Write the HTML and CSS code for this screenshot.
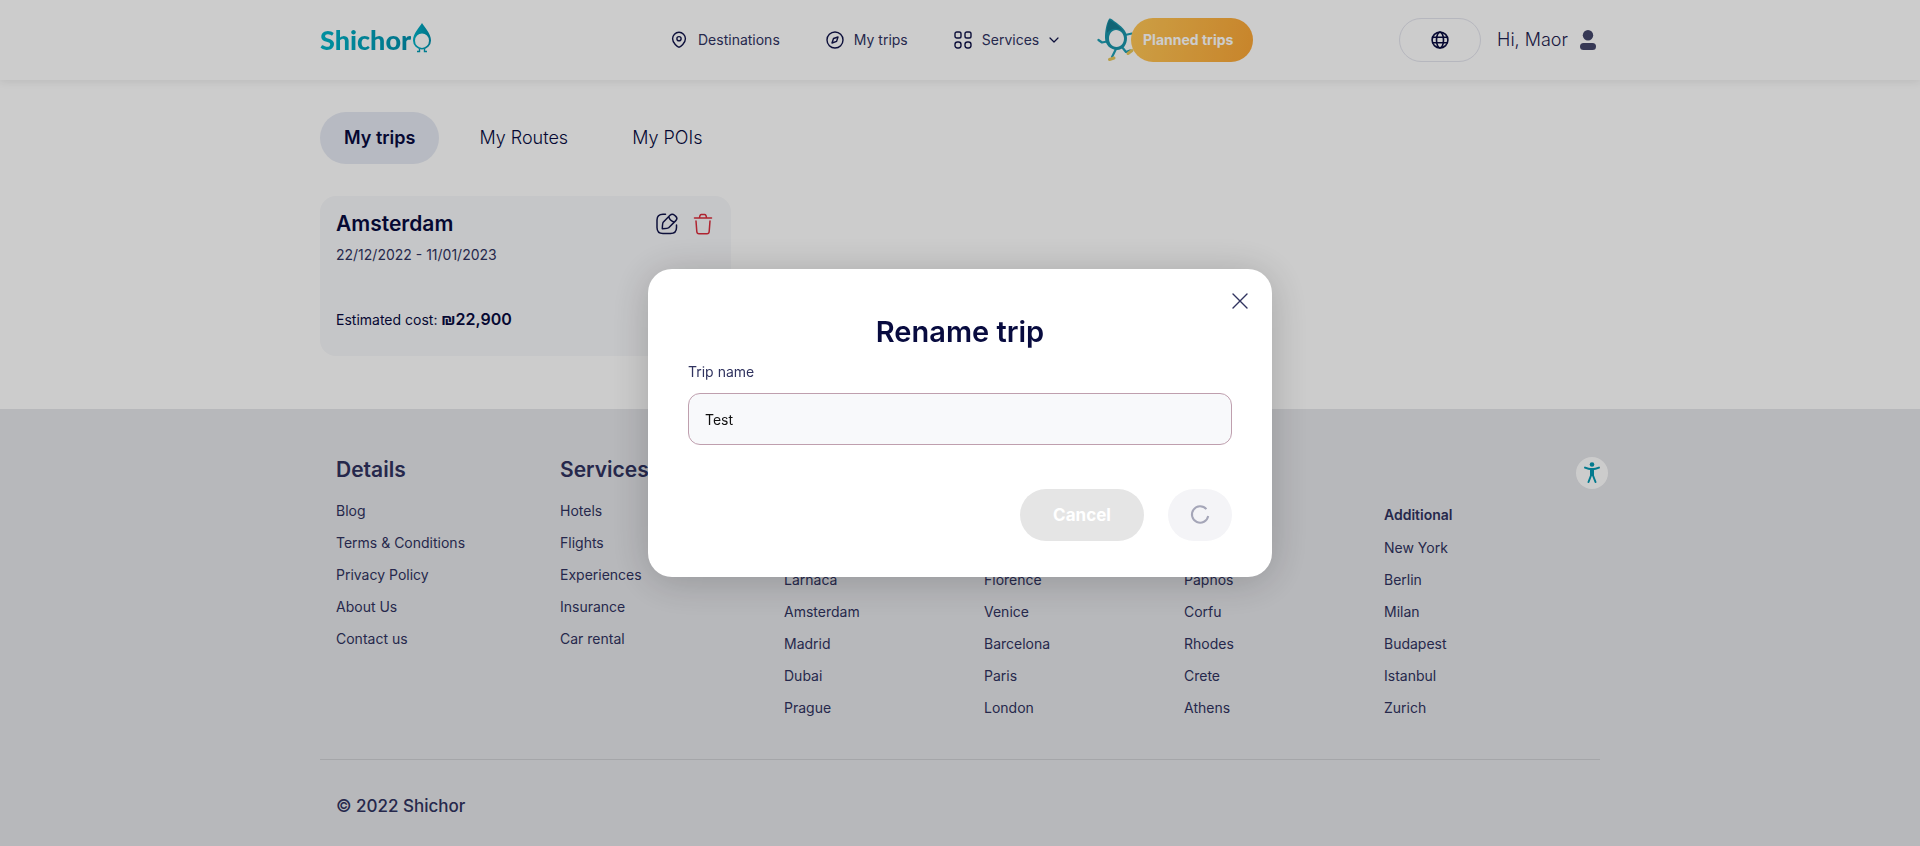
FILE: index.html
```html
<!DOCTYPE html>
<html lang="en">
<head>
<meta charset="utf-8">
<meta name="viewport" content="width=device-width, initial-scale=1">
<title>Shichor – My trips</title>
<link rel="stylesheet" href="styles.css">
</head>
<body>
<div class="page">
  <header class="header">
    <div class="container header-row">
      <a class="logo" href="#">
        <span class="logo-text">Shichor</span>
        <svg class="logo-mark" viewBox="0 0 18 30" aria-hidden="true">
          <defs><linearGradient id="drop" x1="0" x2="1"><stop offset="0" stop-color="#00b4c8"/><stop offset="1" stop-color="#0090ad"/></linearGradient></defs>
          <path fill="url(#drop)" fill-rule="evenodd" d="M9 0C11 4 18 10 18 17.500A9 9 0 0 1 0 17.500C0 10 7 4 9 0ZM9 10.500a7 7.200 0 1 0 0 14.400a7 7.200 0 1 0 0-14.400Z"/>
          <path fill="none" stroke="#009bb5" stroke-width="1.400" d="M6.500 26v2.500H4M11.500 26v2.500H14"/>
        </svg>
      </a>
      <nav class="nav">
        <a class="nav-link" href="#">
          <svg width="18" height="18" viewBox="0 0 18 18" class="line-icon" aria-hidden="true"><path d="M9 16.200C7.500 16.200 2.600 12 2.600 7.700a6.400 6.400 0 0 1 12.800 0C15.400 12 10.500 16.200 9 16.200Z"/><circle cx="9" cy="7.700" r="2.100"/></svg>
          Destinations
        </a>
        <a class="nav-link" href="#">
          <svg width="18" height="18" viewBox="0 0 18 18" class="line-icon" aria-hidden="true"><circle cx="9" cy="9" r="8"/><path d="M12 6 10.600 10.400 6 12 7.500 7.500Z"/></svg>
          My trips
        </a>
        <a class="nav-link" href="#">
          <svg width="18" height="18" viewBox="0 0 18 18" class="line-icon" aria-hidden="true"><rect x="1" y="1" width="6" height="6" rx="1.800"/><rect x="11" y="1" width="6" height="6" rx="1.800"/><rect x="1" y="11" width="6" height="6" rx="2.400"/><rect x="11" y="11" width="6" height="6" rx="2.400"/></svg>
          Services
          <svg width="10" height="6" viewBox="0 0 10 6" class="line-icon chevron" aria-hidden="true"><path d="M1 1l4 4 4-4"/></svg>
        </a>
        <div class="planned">
          <svg class="mascot" viewBox="0 0 38 44" aria-hidden="true">
            <path fill="none" stroke="#1f9fb5" stroke-width="2.200" stroke-linecap="round" stroke-linejoin="round" d="M10 23.500 5 24.500 1.500 22M28 17l7-1.500M19 31l-2 4-2 4M25 29l4 5 4-1.500"/>
            <path fill="none" stroke="#e8c75c" stroke-width="3" stroke-linecap="round" d="M12.500 41.500 17 40M31 35.500l4-3"/>
            <path fill="#1a95ab" fill-rule="evenodd" d="M12 1c1-1 3 0 5 2 7 5 13 9 13 17 0 7-4 12-10 12S8 27 8 20C8 14 9 6 12 1ZM19 12c-4 0-7 4-7 8.500s3 8.500 7.500 8.500S27 25 27 20.500 23.500 12 19 12Z"/>
            <path fill="#146f84" d="M12 2c3 0 11 7 14 11-7-4-13-2-16 2-.500-4 .500-9 2-13Z" opacity=".6"/>
          </svg>
          <button class="planned-button" type="button">Planned trips</button>
        </div>
      </nav>
      <div class="account">
        <button class="language" type="button" aria-label="Language">
          <svg width="18" height="18" viewBox="0 0 18 18" aria-hidden="true"><g fill="none" stroke="#080b3f" stroke-width="1.600"><circle cx="9" cy="9" r="7.900"/><ellipse cx="9" cy="9" rx="3.500" ry="7.900"/><path d="M1.500 6.200h15M1.500 11.800h15"/></g></svg>
        </button>
        <a class="user" href="#">Hi, Maor
          <svg width="16" height="20" viewBox="0 0 16 20" fill="#44476b" aria-hidden="true"><circle cx="8" cy="5.200" r="5.200"/><rect x="0" y="13" width="16" height="7" rx="3.500"/></svg>
        </a>
      </div>
    </div>
  </header>

  <main class="container main">
    <div class="tabs" role="tablist">
      <button class="tab tab-active" type="button" role="tab" aria-selected="true">My trips</button>
      <button class="tab" type="button" role="tab" aria-selected="false">My Routes</button>
      <button class="tab" type="button" role="tab" aria-selected="false">My POIs</button>
    </div>
    <div class="trips">
      <article class="trip">
        <div class="trip-head">
          <h2 class="trip-title">Amsterdam</h2>
          <div class="trip-actions">
            <button class="icon-button" type="button" aria-label="Rename trip">
              <svg width="22" height="22" viewBox="0 0 22 22" fill="none" stroke="#11144a" stroke-width="1.500" stroke-linecap="round" stroke-linejoin="round" aria-hidden="true"><path d="M9.500 1.200H7C2.800 1.200 1 3 1 7v7.500c0 4 1.800 6 6 6h7.500c4 0 6-2 6-6V12"/><path d="M14 2.300 7.200 9.200c-.5.500-.8 3.600-.9 6.500 2.700-.2 5.900-.5 6.400-1L19.800 7.600c1.300-1.300 1.300-2.900 0-4.200l-1.200-1.100c-1.400-1.300-3.300-1.300-4.600 0ZM12.800 3.700c.6 2.600 2.400 4.500 5.200 5.300"/></svg>
            </button>
            <button class="icon-button" type="button" aria-label="Delete trip">
              <svg width="20" height="22" viewBox="0 0 20 22" fill="none" stroke="#db2c3c" stroke-width="1.500" stroke-linecap="round" stroke-linejoin="round" aria-hidden="true"><path d="M1.500 5h17M6.500 4.800c.2-2 .8-3.300 1.800-3.300h3.400c1 0 1.600 1.300 1.800 3.300M3 8l.8 10.500c.1 1.500.7 2.200 2.200 2.200h8c1.500 0 2.100-.700 2.200-2.200L17 8"/></svg>
            </button>
          </div>
        </div>
        <p class="trip-dates">22/12/2022 - 11/01/2023</p>
        <p class="trip-cost">Estimated cost: <strong>₪22,900</strong></p>
      </article>
    </div>
  </main>

  <footer class="footer">
    <div class="container">
      <div class="footer-columns">
        <section>
          <h3 class="footer-title">Details</h3>
          <ul class="links">
            <li><a href="#">Blog</a></li><li><a href="#">Terms &amp; Conditions</a></li><li><a href="#">Privacy Policy</a></li><li><a href="#">About Us</a></li><li><a href="#">Contact us</a></li>
          </ul>
        </section>
        <section>
          <h3 class="footer-title">Services</h3>
          <ul class="links">
            <li><a href="#">Hotels</a></li><li><a href="#">Flights</a></li><li><a href="#">Experiences</a></li><li><a href="#">Insurance</a></li><li><a href="#">Car rental</a></li>
          </ul>
        </section>
        <ul class="links cities">
          <li><a href="#">Larnaca</a></li><li><a href="#">Amsterdam</a></li><li><a href="#">Madrid</a></li><li><a href="#">Dubai</a></li><li><a href="#">Prague</a></li>
        </ul>
        <ul class="links cities">
          <li><a href="#">Florence</a></li><li><a href="#">Venice</a></li><li><a href="#">Barcelona</a></li><li><a href="#">Paris</a></li><li><a href="#">London</a></li>
        </ul>
        <ul class="links cities">
          <li><a href="#">Paphos</a></li><li><a href="#">Corfu</a></li><li><a href="#">Rhodes</a></li><li><a href="#">Crete</a></li><li><a href="#">Athens</a></li>
        </ul>
        <section class="additional">
          <h4 class="links-title">Additional</h4>
          <ul class="links">
            <li><a href="#">New York</a></li><li><a href="#">Berlin</a></li><li><a href="#">Milan</a></li><li><a href="#">Budapest</a></li><li><a href="#">Istanbul</a></li><li><a href="#">Zurich</a></li>
          </ul>
        </section>
      </div>
      <p class="copyright">© 2022 Shichor</p>
    </div>
  </footer>

  <button class="accessibility" type="button" aria-label="Accessibility">
    <svg width="16" height="22" viewBox="0 0 16 22" aria-hidden="true"><circle cx="8" cy="2.500" r="2.300" fill="#0499b2"/><path fill="none" stroke="#0499b2" stroke-width="1.900" stroke-linecap="round" stroke-linejoin="round" d="M1 5.600C5 7.400 11 7.400 15 5.600"/><path fill="none" stroke="#0499b2" stroke-width="2" stroke-linecap="round" stroke-linejoin="round" d="M7 7v6.500L4.500 20M9 7v6.500l2.500 6.500M8 7v6"/></svg>
  </button>
</div>

<div class="backdrop">
  <form class="modal" role="dialog" aria-modal="true" aria-labelledby="rename-title">
    <button class="close" type="button" aria-label="Close">
      <svg width="16" height="16" viewBox="0 0 16 16" aria-hidden="true"><path fill="none" stroke="#30335f" stroke-width="1.400" stroke-linecap="round" d="M1 1l14 14M15 1 1 15"/></svg>
    </button>
    <h1 class="modal-title" id="rename-title">Rename trip</h1>
    <label class="field-label" for="trip-name">Trip name</label>
    <input class="field" id="trip-name" type="text" value="Test">
    <div class="modal-actions">
      <button class="cancel" type="button" disabled>Cancel</button>
      <button class="submit" type="submit" aria-label="Saving" disabled>
        <svg width="20" height="20" viewBox="0 0 20 20" aria-hidden="true"><path fill="none" stroke="#a5a6b8" stroke-width="2" d="M16.400 4.200A8.200 8.200 0 1 0 18.200 11"/></svg>
      </button>
    </div>
  </form>
</div>
</body>
</html>
```
FILE: styles.css
```css
* { box-sizing: border-box; }

body {
  margin: 0;
  background: #fff;
  color: #080b3f;
  font-family: Inter, "Liberation Sans", sans-serif;
  font-size: 14px;
  font-weight: 400;
  line-height: 24px;
}

h1, h2, h3, h4, p, ul { margin: 0; padding: 0; }
ul { list-style: none; }
a { color: inherit; text-decoration: none; }
button { margin: 0; border: 0; padding: 0; background: none; color: inherit; font: inherit; }
svg { display: block; flex: none; }

.page { display: flex; flex-direction: column; min-height: 100vh; }
.container { width: 100%; max-width: 1280px; margin: 0 auto; }

.header { box-shadow: 0 2px 8px rgba(0, 0, 0, 0.08); }
.header-row {
  display: grid;
  grid-template-columns: 350px 1fr auto;
  align-items: center;
  height: 80px;
}
.logo { display: flex; align-items: center; gap: 2px; }
.logo-text {
  background: linear-gradient(90deg, #00b4c8, #0090ad);
  background-clip: text;
  color: transparent;
  font-family: Lato, sans-serif;
  font-size: 27px;
  font-weight: 900;
  line-height: 32px;
}
.logo-mark { width: 18px; height: 30px; margin-bottom: 4px; }

.nav { display: flex; align-items: center; gap: 46px; }
.nav-link { display: flex; align-items: center; gap: 10px; color: #30335f; }
.line-icon { fill: none; stroke: #11144a; stroke-width: 1.4; stroke-linecap: round; stroke-linejoin: round; }
.chevron { stroke-width: 1.2; }
.planned { display: flex; align-items: center; }
.mascot { width: 38px; height: 44px; margin-left: -8px; margin-right: -4px; }
.planned-button {
  position: relative;
  width: 122px;
  height: 44px;
  padding-right: 8px;
  border-radius: 22px;
  background: linear-gradient(100deg, #ffc756, #fba636);
  color: #fff;
  font-weight: 700;
}

.account { display: flex; align-items: center; gap: 16px; padding-right: 4px; }
.language {
  display: flex;
  align-items: center;
  justify-content: center;
  width: 82px;
  height: 44px;
  border: 1px solid #e4e5ee;
  border-radius: 22px;
}
.user { display: flex; align-items: center; gap: 12px; color: #1f2250; font-size: 18px; font-weight: 300; }

.main { padding: 32px 0 53px; }
.tabs { display: flex; gap: 16px; }
.tab { height: 52px; padding: 0 24px; border-radius: 26px; font-size: 18px; font-weight: 300; }
.tab-active { background: #e5e9f3; font-weight: 600; }

.trips { display: grid; grid-template-columns: repeat(3, 1fr); gap: 24px; margin-top: 32px; }
.trip { height: 160px; padding: 16px; border-radius: 16px; background: #f7f8fa; }
.trip-head { display: flex; align-items: center; justify-content: space-between; padding-right: 2px; }
.trip-title { font-size: 21px; font-weight: 600; }
.trip-actions { display: flex; gap: 15px; }
.trip-dates { margin-top: 7px; color: #30335f; }
.trip-cost { margin-top: 40px; }
.trip-cost strong { font-size: 16px; font-weight: 600; }

.footer { flex: 1; background: #e5e6ea; color: #30335f; }
.footer-columns {
  display: grid;
  grid-template-columns: 224px 224px 200px 200px 200px 1fr;
  padding: 49px 16px 39px;
  border-bottom: 1px solid #cfd0d4;
}
.footer-title { margin-bottom: 17px; font-size: 21px; font-weight: 600; }
.links { display: grid; gap: 8px; align-content: start; }
.cities { align-self: end; }
.additional { padding-top: 45px; }
.links-title { margin-bottom: 9px; font-size: 14px; font-weight: 600; }
.copyright { padding: 34px 16px; font-size: 17px; font-weight: 500; }

.accessibility {
  position: fixed;
  top: 457px;
  right: 312px;
  display: flex;
  align-items: center;
  justify-content: center;
  width: 32px;
  height: 32px;
  border-radius: 50%;
  background: #fff;
}

.backdrop {
  position: fixed;
  inset: 0;
  display: flex;
  align-items: center;
  justify-content: center;
  background: rgba(0, 0, 0, 0.2);
}
.modal {
  position: relative;
  display: flex;
  flex-direction: column;
  width: 624px;
  max-width: 100%;
  padding: 44px 40px 36px;
  border-radius: 24px;
  background: #fff;
  box-shadow: 0 4px 40px rgba(0, 0, 0, 0.2);
}
.close { position: absolute; top: 24px; right: 24px; }
.modal-title { font-size: 29px; font-weight: 600; line-height: 38px; text-align: center; }
.field-label { margin-top: 9px; color: #30335f; }
.field {
  width: 100%;
  height: 52px;
  margin-top: 9px;
  padding: 0 16px;
  border: 1px solid #bf9fae;
  border-radius: 12px;
  background: #f8f9fb;
  color: #111;
  font: inherit;
}
.modal-actions { display: flex; justify-content: flex-end; gap: 24px; margin-top: 44px; }
.cancel {
  width: 124px;
  height: 52px;
  border-radius: 26px;
  background: #e5e5e5;
  color: #fff;
  font-size: 17px;
  font-weight: 700;
}
.submit {
  display: flex;
  align-items: center;
  justify-content: center;
  width: 64px;
  height: 52px;
  border-radius: 26px;
  background: #f4f4f7;
}
```
